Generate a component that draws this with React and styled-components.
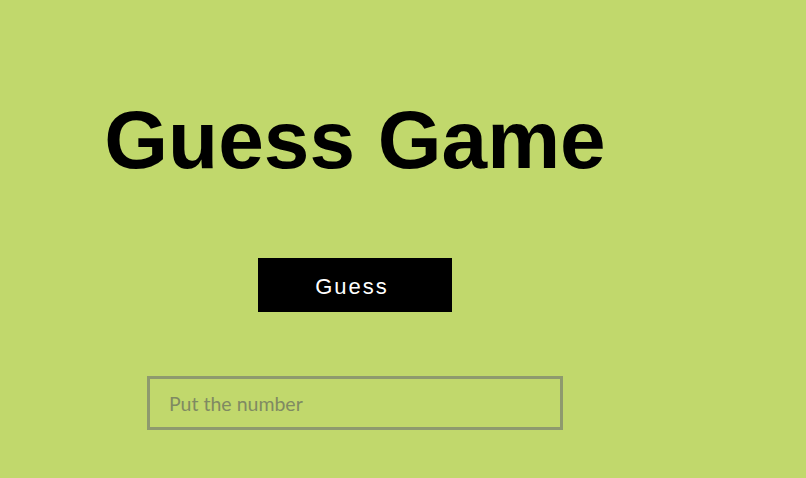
import React from "react"
import styled, { createGlobalStyle } from "styled-components"

const GlobalStyle = createGlobalStyle`
  html, body {
    margin: 0;
    padding: 0;
    background: #c1d86c;
  }
  body {
    font-family: "Liberation Sans", Arial, sans-serif;
  }
`

const Page = styled.div`
  min-height: 100vh;
  background: #c1d86c;
`

const Column = styled.main`
  width: 710px;
  display: flex;
  flex-direction: column;
  align-items: center;
  padding-top: 99px;
`

const Title = styled.h1`
  margin: 0;
  font-family: "Liberation Sans", Arial, sans-serif;
  font-weight: 700;
  font-size: 82px;
  line-height: 82px;
  color: #000;
`

const Button = styled.button`
  margin-top: 77px;
  width: 194px;
  height: 54px;
  padding: 3px 6px 0 0;
  border: none;
  background: #000;
  color: #fff;
  font-family: "Liberation Sans", Arial, sans-serif;
  font-size: 22px;
  letter-spacing: 2px;
  cursor: pointer;
`

const Input = styled.input`
  margin-top: 64px;
  box-sizing: border-box;
  width: 416px;
  height: 54px;
  padding: 0 19px;
  border: 3px solid #8e9a6e;
  background: transparent;
  font-family: Lato, "Open Sans", sans-serif;
  font-size: 19.5px;
  color: #333;
  outline: none;

  &::placeholder {
    color: #7f8a62;
  }
`

export default function App() {
  return (
    <Page>
      <GlobalStyle />
      <Column>
        <Title>Guess Game</Title>
        <Button>Guess</Button>
        <Input placeholder="Put the number" />
      </Column>
    </Page>
  )
}
